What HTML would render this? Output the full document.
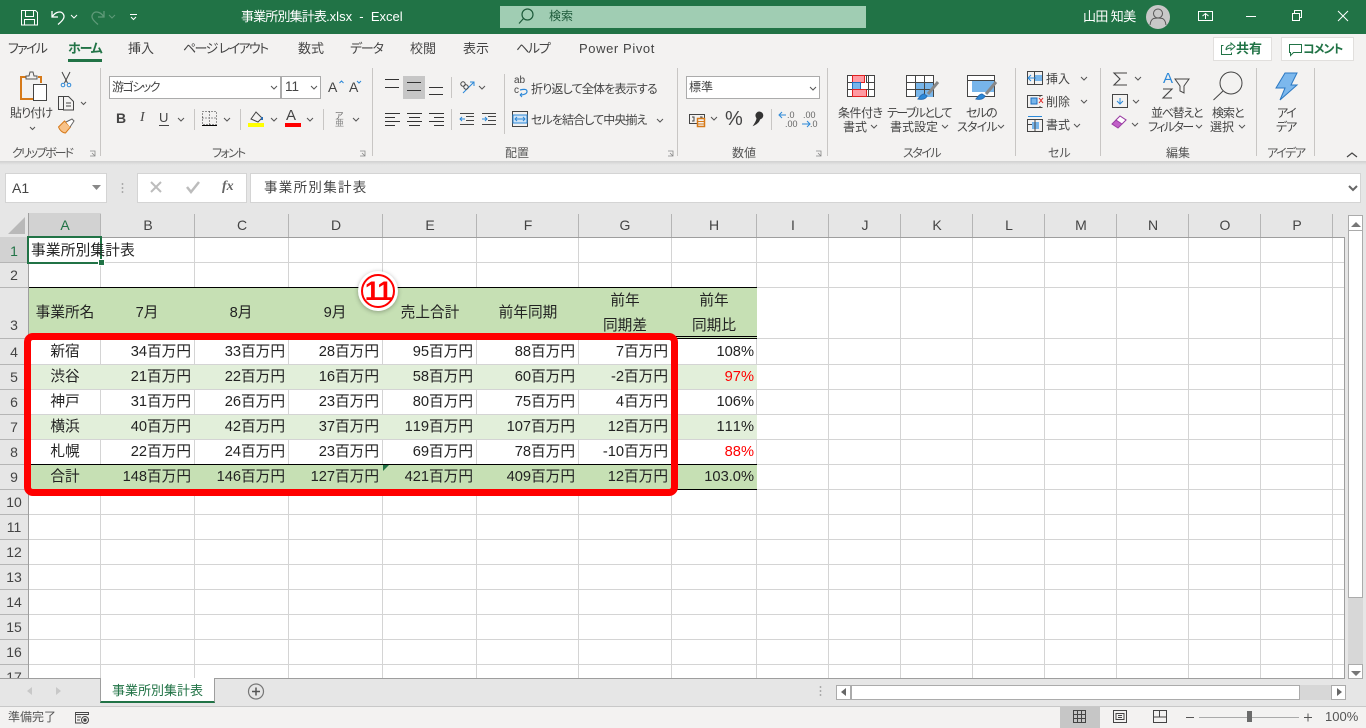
<!DOCTYPE html>
<html lang="ja"><head><meta charset="utf-8"><title>事業所別集計表.xlsx - Excel</title>
<style>
html,body{margin:0;padding:0}
body{width:1366px;height:728px;overflow:hidden;position:relative;background:#e6e6e6;font-family:"Liberation Sans","Noto Sans CJK JP",sans-serif;color:#444;font-feature-settings:"palt"}
div,svg{position:absolute}
svg{overflow:visible}
.t{white-space:nowrap;line-height:16px;font-size:12px;color:#444}
.tab{font-size:13px;top:41px;color:#444}
.g{font-size:12px;top:145px;color:#555}
.w{color:#fff}
.box{background:#fff;border:1px solid #ababab;box-sizing:border-box}
.dv{width:1px;top:68px;height:88px;background:#c8c6c4}
.sd{width:1px;background:#c8c6c4}
.col{top:217px;width:60px;text-align:center;font-size:14px;line-height:16px;color:#444}
.row{left:0;width:28px;text-align:center;font-size:14px;line-height:16px;color:#444}
.c{font-size:14.67px;line-height:18px;color:#222;white-space:nowrap;font-feature-settings:normal;font-kerning:none}
.r{text-align:right;width:90px}
.m{text-align:center;width:90px}
</style></head><body>
<!-- title bar -->
<div style="left:0;top:0;width:1366px;height:34px;background:#217346"></div>
<svg style="left:0;top:0" width="1366" height="34" fill="none" stroke="#fff" stroke-width="1">
<path d="M21.500 10.500h14l2 2v12.500h-16z M25.500 10.500v6h8v-6 M24.500 25v-5.500h10v5.500"/>
<path d="M52 11v6h6 M52.500 16.500c3-5 9-6 11-2 2 3.500-2 7-5.500 10" stroke-width="1.300"/>
<path d="M71 15l3 3 3-3" stroke-width="1"/>
<g stroke="#5f9a79"><path d="M104 11v6h-6 M103.500 16.500c-3-5-9-6-11-2-2 3.500 2 7 5.500 10" stroke-width="1.300"/><path d="M109 15l3 3 3-3"/></g>
<path d="M130 14.500h7 M131 17l2.500 2.500 2.500-2.500"/>
<rect x="1198.500" y="11.500" width="14" height="9"/><path d="M1202.500 16l3-2.500 3 2.500 M1205.500 14v5"/>
<path d="M1246 16.500h10"/>
<path d="M1292.500 13.500h7v7h-7z M1294.500 13v-2.500h7v7h-2"/>
<path d="M1338 11l10 10 M1348 11l-10 10"/>
</svg>
<div class="t w" style="left:241px;top:8px;font-size:13px;line-height:18px"><span style="letter-spacing:-.85px">事業所別集計表</span>.xlsx&nbsp; -&nbsp; Excel</div>
<div style="left:500px;top:6px;width:366px;height:22px;background:#a0cdb3"></div>
<svg style="left:0;top:0" width="900" height="34" fill="none" stroke="#1d5a3a" stroke-width="1.200"><circle cx="527.500" cy="14.500" r="5.500"/><path d="M523.500 18.500l-4.500 5"/></svg>
<div class="t" style="left:549px;top:8px;font-size:12px;line-height:16px;color:#1d5a3a">検索</div>
<div class="t w" style="left:1083px;top:9px;font-size:13px;letter-spacing:-.6px">山田 知美</div>
<div style="left:1146px;top:5px;width:24px;height:24px;border-radius:50%;background:#c8c8c8"></div>
<svg style="left:0;top:0" width="1366" height="34" fill="none" stroke="#555" stroke-width="1"><circle cx="1158" cy="13.500" r="4.500"/><path d="M1150 25c1-7 4-7 8-7s7 0 8 7"/></svg>
<!-- ribbon -->
<div style="left:0;top:34px;width:1366px;height:127px;background:#f3f2f1"></div>
<div style="left:0;top:161px;width:1366px;height:4px;background:linear-gradient(#d0d0d0,#e6e6e6)"></div>
<div class="t tab" style="left:8px;letter-spacing:-1.7px">ファイル</div>
<div class="t tab" style="left:68px;font-weight:700;color:#217346;letter-spacing:-1.2px">ホーム</div>
<div style="left:68px;top:59px;width:34px;height:3px;background:#217346"></div>
<div class="t tab" style="left:128px">挿入</div>
<div class="t tab" style="left:183px;letter-spacing:-1.6px">ページ レイアウト</div>
<div class="t tab" style="left:298px">数式</div>
<div class="t tab" style="left:350px;letter-spacing:-1.2px">データ</div>
<div class="t tab" style="left:410px">校閲</div>
<div class="t tab" style="left:463px">表示</div>
<div class="t tab" style="left:516px;letter-spacing:-1.3px">ヘルプ</div>
<div class="t tab" style="left:579px;letter-spacing:.6px">Power Pivot</div>
<div class="box" style="left:1213px;top:37px;width:59px;height:24px;background:#fff;border-color:#e1dfdd"></div>
<div class="t" style="left:1236px;top:41px;font-size:13px;font-weight:700;color:#217346">共有</div>
<div class="box" style="left:1281px;top:37px;width:73px;height:24px;background:#fff;border-color:#e1dfdd"></div>
<div class="t" style="left:1303px;top:41px;font-size:12px;font-weight:700;color:#217346;letter-spacing:-1px">コメント</div>
<svg style="left:0;top:0" width="1366" height="70" fill="none" stroke="#217346" stroke-width="1"><path d="M1223.500 45.500h-2v9h10v-2 M1226 50c0-3 2-5 5-5v-2l4 3.500-4 3.500v-2c-2 0-4 1-5 2"/><path d="M1289.500 44.500h12v8h-8l-3 3v-3h-1z"/></svg>
<div class="dv" style="left:100px"></div><div class="dv" style="left:372px"></div><div class="dv" style="left:677px"></div><div class="dv" style="left:827px"></div><div class="dv" style="left:1015px"></div><div class="dv" style="left:1100px"></div><div class="dv" style="left:1256px"></div><div class="dv" style="left:1314px"></div>
<div class="sd" style="left:194px;top:109px;height:21px"></div><div class="sd" style="left:240px;top:109px;height:21px"></div><div class="sd" style="left:323px;top:109px;height:21px"></div>
<div class="sd" style="left:451px;top:77px;height:21px"></div><div class="sd" style="left:451px;top:109px;height:21px"></div><div class="sd" style="left:504px;top:74px;height:60px"></div><div class="sd" style="left:771px;top:109px;height:21px"></div>
<!-- group labels -->
<div class="t g" style="left:12px;letter-spacing:-2px">クリップボード</div><div class="t g" style="left:212px;letter-spacing:-1.7px">フォント</div><div class="t g" style="left:505px">配置</div><div class="t g" style="left:732px">数値</div><div class="t g" style="left:903px;letter-spacing:-1.5px">スタイル</div><div class="t g" style="left:1048px">セル</div><div class="t g" style="left:1166px">編集</div><div class="t g" style="left:1267px;letter-spacing:-1.5px">アイデア</div>
<!-- clipboard -->
<svg style="left:0;top:0" width="110" height="140" fill="none" stroke="#444" stroke-width="1">
<path d="M27 77h-6v22h12" stroke="#d67a1a" stroke-width="2"/><path d="M38 77h3v6" stroke="#d67a1a" stroke-width="2"/>
<path d="M26 79v-3h3l1-4h3l1 4h3v3z" fill="#f3f2f1" stroke="#555"/>
<rect x="33.500" y="84.500" width="13" height="16" fill="#fff"/>
<path d="M62 72l5.500 11 M70 72l-5.500 11" stroke="#444"/><circle cx="63" cy="85" r="1.800" stroke="#2b88d8"/><circle cx="69" cy="85" r="1.800" stroke="#2b88d8"/>
<path d="M63.500 96.500h-5v13h5 M63.500 99.500v-3h5l5 5v8.500h-10z M66 103h5 M66 106h5"/>
<path d="M81 102l2.500 2.500 2.500-2.500" stroke="#555"/>
<path d="M58.500 127l6-6 6 6-5 6c-3 0-6-3-7-6z" fill="#f8c288" stroke="#d67a1a"/><path d="M66 122l6-3 2 2-4 6" fill="#fff" stroke="#666"/>
<path d="M30 127l2.500 2.500 2.500-2.500" stroke="#555"/>
<path d="M90 151h5v5h-5" stroke="#888" stroke-width=".8"/><path d="M92 153l3 3" stroke="#888" stroke-width=".8"/>
</svg>
<div class="t" style="left:10px;top:105px;letter-spacing:-.9px">貼り付け</div>
<!-- font -->
<div class="box" style="left:109px;top:76px;width:172px;height:23px"></div><div class="box" style="left:281px;top:76px;width:40px;height:23px"></div>
<div class="t" style="left:112px;top:79px;font-size:12px;letter-spacing:-1.5px">游ゴシック</div><div class="t" style="left:285px;top:79px;font-size:13.5px">11</div>
<div class="t" style="left:328px;top:79px;font-size:14px;line-height:17px">A</div><div class="t" style="left:349px;top:79px;font-size:14px;line-height:17px">A</div>
<div class="t" style="left:116px;top:110px;font-size:14px;font-weight:700">B</div><div class="t" style="left:140px;top:110px;font-size:14px;font-style:italic;font-family:'Liberation Serif',serif">I</div><div class="t" style="left:159px;top:110px;font-size:13px">U</div>
<div class="t" style="left:286px;top:107px;font-size:15px;line-height:18px">A</div>
<div class="t" style="left:335px;top:111px;font-size:9px;line-height:10px;color:#666">ア</div><div class="t" style="left:335px;top:119px;font-size:9px;line-height:9px;color:#888">亜</div>
<svg style="left:0;top:0" width="680" height="160" fill="none" stroke="#444" stroke-width="1">
<path d="M271 86l3 3 3-3 M311 86l3 3 3-3 M178 118l3 3 3-3 M224 118l3 3 3-3 M271 118l3 3 3-3 M307 118l3 3 3-3 M353 118l3 3 3-3 M479 86l3 3 3-3 M657 119l3 3 3-3" stroke="#555"/>
<path d="M339.500 83l2-2 2 2 M357 81l2 2 2-2" stroke="#2b88d8"/>
<path d="M159 125.500h10" />
<path d="M202.500 111.500h14v13h-14z M209.500 111.500v13 M202.500 118h14" stroke-dasharray="1 2" stroke="#333"/><path d="M202 125.500h15" stroke="#000"/>
<path d="M251 119l5-7 6 6-4 4z" /><path d="M262 117v3" stroke="#2b6cb0" stroke-width="2"/>
<rect x="248" y="123" width="16" height="4" fill="#ff0" stroke="none"/>
<rect x="285" y="123" width="16" height="4" fill="#f00" stroke="none"/>
<!-- alignment -->
<rect x="403" y="76" width="22" height="23" fill="#c6c6c6" stroke="none"/>
<path d="M385 79.500h14 M385 87.500h14 M407 82.500h14 M407 90.500h14 M429 87.500h14 M429 94.500h14" stroke="#333"/>
<path d="M385 113.500h15 M385 117.500h10 M385 121.500h15 M385 125.500h10" stroke="#333"/>
<path d="M407 113.500h15 M409 117.500h11 M407 121.500h15 M409 125.500h11" stroke="#333"/>
<path d="M429 113.500h15 M434 117.500h10 M429 121.500h15 M434 125.500h10" stroke="#333"/>
<path d="M460 124.500h14 M466 116.500h8 M466 120.500h8 M460 113.500h14" stroke-width=".9"/>
<path d="M482 124.500h14 M488 116.500h8 M488 120.500h8 M482 113.500h14" stroke-width=".9"/>
<path d="M465 119h-5m2-2l-2 2 2 2" stroke="#2b88d8"/><path d="M482 119h5m-2-2l2 2-2 2" stroke="#2b88d8"/>
<path d="M463 93l11-11m-4 0h4v4" stroke="#2b88d8"/><circle cx="463" cy="84" r="2.200"/><circle cx="466" cy="87" r="2.200"/>
<path d="M520 95c3 0 7-1 7-3.500s-3-2.500-7-1.500" stroke="#2b88d8" stroke-width="1.200"/>
<path d="M520 95l2-2 M520 95l2 2" stroke="#2b88d8"/>
<rect x="512.500" y="111.500" width="15" height="15" /><rect x="513" y="115" width="14" height="8" fill="#cfe4f7" stroke="#2b88d8"/>
<path d="M515 119h10 M517 117l-2 2 2 2 M523 117l2 2-2 2" stroke="#2b88d8"/>
</svg>
<div class="t" style="left:514px;top:76px;font-size:10px;line-height:10px">ab</div><div class="t" style="left:514px;top:86px;font-size:10px;line-height:10px">c</div>
<div class="t" style="left:531px;top:81px;font-size:12px;letter-spacing:-.8px">折り返して全体を表示する</div>
<div class="t" style="left:531px;top:112px;font-size:12px;letter-spacing:-.9px">セルを結合して中央揃え</div>
<!-- number -->
<div class="box" style="left:686px;top:76px;width:134px;height:23px"></div>
<div class="t" style="left:689px;top:79px;font-size:12px">標準</div>
<div class="t" style="left:725px;top:108px;font-size:20px;line-height:22px">%</div>
<div class="t" style="left:787px;top:111px;font-size:9px;line-height:9px;color:#666">.0</div><div class="t" style="left:785px;top:120px;font-size:9px;line-height:9px;color:#666">.00</div>
<div class="t" style="left:803px;top:111px;font-size:9px;line-height:9px;color:#666">.00</div><div class="t" style="left:810px;top:120px;font-size:9px;line-height:9px;color:#666">.0</div>
<svg style="left:0;top:0" width="830" height="160" fill="none" stroke="#444" stroke-width="1">
<path d="M810 87l3 3 3-3 M711 117l3 3 3-3" stroke="#555"/>
<path d="M689.500 114.500h15v9h-15z M692 117h2v4h-2 M700 117h2v4h-2" />
<rect x="697.500" y="118.500" width="7" height="8" fill="#f3f2f1" stroke="#d67a1a" stroke-width="1.500"/><path d="M698 121.500h6 M698 124h6" stroke="#d67a1a"/>
<path d="M757 113a3.400 3.400 0 1 1-.1 .1 M760 116c.5 4-2 7-6 9 2-3 3-5 3-7" fill="#333" stroke="#333"/>
<path d="M780 115h6m-4-3l-3 3 3 3" stroke="#2b88d8"/><path d="M802 124h8m-3-3l3 3-3 3" stroke="#2b88d8"/>
</svg>
<!-- styles -->
<svg style="left:0;top:0" width="1366" height="160" fill="none" stroke="#444" stroke-width="1">
<rect x="847.500" y="75.500" width="27" height="21" fill="#fff"/>
<rect x="852.500" y="75.500" width="12" height="7" fill="#ff9aa2" stroke="#e02020"/>
<rect x="852.500" y="82.500" width="8" height="7" fill="#77b5ea" stroke="#1f6fc0"/>
<rect x="852.500" y="89.500" width="14" height="7" fill="#ff9aa2" stroke="#e02020"/>
<path d="M866.500 75v7 M868.500 75v22 M847 82.500h5 M847 89.500h5 M866 82.500h8 M866 89.500h8"/>
<rect x="906.500" y="75.500" width="27" height="21" fill="#fff"/>
<rect x="915" y="82" width="18" height="15" fill="#77b5ea" stroke="none"/>
<path d="M906 82.500h28 M906 89.500h28 M915.500 75v22 M924.500 75v22"/>
<path d="M938 82l-10 12" stroke="#888" stroke-width="3"/><path d="M924 94c-3 0-4 3-6 5 4 1 8 0 9-3z" fill="#2b88d8" stroke="#2b6cb0"/>
<rect x="967.500" y="75.500" width="27" height="21" fill="#fff"/>
<rect x="972" y="80" width="22" height="12" fill="#77b5ea" stroke="none"/>
<path d="M967 80.500h28"/>
<path d="M996 82l-10 12" stroke="#888" stroke-width="3"/><path d="M982 94c-3 0-4 3-6 5 4 1 8 0 9-3z" fill="#2b88d8" stroke="#2b6cb0"/>
<path d="M871 125l3 3 3-3 M942 125l3 3 3-3 M998 125l3 3 3-3 M1081 77l3 3 3-3 M1081 100l3 3 3-3 M1074 124l3 3 3-3 M1135 77l3 3 3-3 M1133 100l3 3 3-3 M1132 123l3 3 3-3 M1196 125l3 3 3-3 M1239 125l3 3 3-3" stroke="#555"/>
<!-- cells -->
<path d="M1027.500 71.500h15v13h-15z M1034.500 71v14 M1027 78h16" /><rect x="1035" y="75" width="7" height="6" fill="#77b5ea" stroke="none"/><path d="M1036 78h-8m3-3l-3 3 3 3" stroke="#2b88d8"/>
<path d="M1027.500 95.500h15 M1027.500 107.500h15 M1027.500 95v13 M1040 95v2 M1040 106v2" /><rect x="1031" y="98" width="6" height="6" fill="#77b5ea" stroke="#1f6fc0"/><path d="M1039 98l4 5 M1043 98l-4 5" stroke="#e02020"/>
<rect x="1027.500" y="119.500" width="15" height="12"/><rect x="1032" y="122" width="7" height="7" fill="#77b5ea" stroke="none"/><path d="M1032 124.500h-4 M1035 120v11" stroke="#444"/><path d="M1028 116.500h14" stroke="#2b88d8"/>
<!-- edit -->
<path d="M1127 73h-13l6 6-6 6h13" stroke-width="1.100"/>
<rect x="1112.500" y="94.500" width="15" height="13"/><path d="M1120 98v6m-3-3l3 3 3-3" stroke="#2b88d8"/>
<path d="M1112 124l8-8 6 4-8 8z" fill="#c15fc8" stroke="#9a3ea3"/>
<path d="M1120 116l6 4-4 4-6-4z" fill="#fff" stroke="#9a3ea3"/>
<path d="M1175 79h14l-5 7v7l-4-2v-5z"/>
<path d="M1163 89h9l-9 9h9" stroke-width="1.100"/>
<circle cx="1231" cy="83" r="11"/><path d="M1223 91l-9.500 9" />
<path d="M1285 73h12l-6 12h6l-17 15 5-12h-9z" fill="#7cb8ed" stroke="#2b78c2"/>
<path d="M1347 157l5-4 5 4" stroke="#444" stroke-width="1.200"/>
<path d="M360 151h5v5h-5 M362 153l3 3 M668 151h5v5h-5 M670 153l3 3 M816 151h5v5h-5 M818 153l3 3" stroke="#888" stroke-width=".8"/>
</svg>
<div class="t" style="left:1163px;top:70px;font-size:15px;line-height:17px;color:#2b88d8">A</div>
<div class="t" style="left:838px;top:105px;letter-spacing:-.5px">条件付き</div><div class="t" style="left:843px;top:119px">書式</div>
<div class="t" style="left:887px;top:105px;letter-spacing:-1.6px">テーブルとして</div><div class="t" style="left:890px;top:119px">書式設定</div>
<div class="t" style="left:966px;top:105px;letter-spacing:-1.3px">セルの</div><div class="t" style="left:957px;top:119px;letter-spacing:-.8px">スタイル</div>
<div class="t" style="left:1046px;top:71px">挿入</div><div class="t" style="left:1046px;top:94px">削除</div><div class="t" style="left:1046px;top:117px">書式</div>
<div class="t" style="left:1151px;top:105px;letter-spacing:-1.3px">並べ替えと</div><div class="t" style="left:1148px;top:119px;letter-spacing:-1.6px">フィルター</div>
<div class="t" style="left:1212px;top:105px;letter-spacing:-1px">検索と</div><div class="t" style="left:1210px;top:119px">選択</div>
<div class="t" style="left:1277px;top:105px;letter-spacing:-1.5px">アイ</div><div class="t" style="left:1276px;top:119px;letter-spacing:-1px">デア</div>
<!-- formula bar -->
<div class="box" style="left:5px;top:173px;width:102px;height:30px;border-color:#d4d4d4"></div>
<div class="t" style="left:12px;top:180px;font-size:14px">A1</div>
<div class="box" style="left:137px;top:173px;width:110px;height:30px;border-color:#d4d4d4"></div>
<div class="box" style="left:250px;top:173px;width:1111px;height:30px;border-color:#d4d4d4"></div>
<div class="t" style="left:264px;top:179px;font-size:13.5px;line-height:17px;letter-spacing:1.3px;font-feature-settings:normal">事業所別集計表</div>
<div class="t" style="left:222px;top:179px;font-size:14px;font-style:italic;font-weight:700;font-family:'Liberation Serif',serif;color:#666">fx</div>
<svg style="left:0;top:0" width="1366" height="240" fill="none" stroke="#bcbcbc" stroke-width="2">
<path d="M92 185h9l-4.500 5z" fill="#888" stroke="none"/>
<path d="M122.500 183v2 M122.500 187v2 M122.500 191v2" stroke="#aaa" stroke-width="1.500"/>
<path d="M151 182l10 10 M161 182l-10 10"/>
<path d="M187 187l4 5 8-10" stroke-width="2.500"/>
<path d="M1349 186l4 4 4-4" stroke="#666"/>
<path d="M8 234l17-17v17z" fill="#b9b9b9" stroke="none"/>
</svg>
<!-- headers -->
<div style="left:29px;top:213px;width:72px;height:24px;background:#d2d2d2"></div>
<div style="left:0;top:237px;width:28px;height:25px;background:#d2d2d2"></div>
<div style="left:29px;top:237px;width:1315px;height:441px;background:#fff"></div>
<svg style="left:0;top:0" width="1366" height="728" fill="none" stroke="#d4d4d4" stroke-width="1">
<path d="M100.500 237V678M194.500 237V678M288.500 237V678M382.500 237V678M476.500 237V678M578.500 237V678M671.500 237V678M756.500 237V678M828.500 237V678M900.500 237V678M972.500 237V678M1044.500 237V678M1116.500 237V678M1188.500 237V678M1260.500 237V678M1332.500 237V678"/>
<path d="M29 262.500H1344M29 287.500H1344M29 338.500H1344M29 364.500H1344M29 389.500H1344M29 414.500H1344M29 439.500H1344M29 464.500H1344M29 489.500H1344M29 514.500H1344M29 539.500H1344M29 564.500H1344M29 589.500H1344M29 614.500H1344M29 639.500H1344M29 664.500H1344"/>
<path stroke="#b5b5b5" d="M100.500 214V237M194.500 214V237M288.500 214V237M382.500 214V237M476.500 214V237M578.500 214V237M671.500 214V237M756.500 214V237M828.500 214V237M900.500 214V237M972.500 214V237M1044.500 214V237M1116.500 214V237M1188.500 214V237M1260.500 214V237M1332.500 214V237"/>
<path stroke="#b5b5b5" d="M0 262.500H28M0 287.500H28M0 338.500H28M0 364.500H28M0 389.500H28M0 414.500H28M0 439.500H28M0 464.500H28M0 489.500H28M0 514.500H28M0 539.500H28M0 564.500H28M0 589.500H28M0 614.500H28M0 639.500H28M0 664.500H28"/>
<path stroke="#9e9e9e" d="M28.500 213V678M28 237.500H1344.500V678"/>
</svg>
<div class="col" style="left:35px;color:#217346">A</div><div class="col" style="left:118px">B</div><div class="col" style="left:212px">C</div><div class="col" style="left:306px">D</div><div class="col" style="left:400px">E</div><div class="col" style="left:498px">F</div><div class="col" style="left:595px">G</div><div class="col" style="left:684px">H</div><div class="col" style="left:763px">I</div><div class="col" style="left:835px">J</div><div class="col" style="left:907px">K</div><div class="col" style="left:979px">L</div><div class="col" style="left:1051px">M</div><div class="col" style="left:1123px">N</div><div class="col" style="left:1195px">O</div><div class="col" style="left:1267px">P</div>
<div class="row" style="top:243px;color:#217346">1</div><div class="row" style="top:267px">2</div><div class="row" style="top:317px">3</div><div class="row" style="top:344px">4</div><div class="row" style="top:369px">5</div><div class="row" style="top:394px">6</div><div class="row" style="top:419px">7</div><div class="row" style="top:444px">8</div><div class="row" style="top:469px">9</div><div class="row" style="top:494px">10</div><div class="row" style="top:519px">11</div><div class="row" style="top:544px">12</div><div class="row" style="top:569px">13</div><div class="row" style="top:594px">14</div><div class="row" style="top:619px">15</div><div class="row" style="top:644px">16</div><div class="row" style="top:669px;height:9px;overflow:hidden">17</div>
<!-- fills -->
<div style="left:29px;top:287px;width:728px;height:52px;background:#c6e0b4;border-top:1px solid #000;border-bottom:3px double #000;box-sizing:border-box"></div>
<div style="left:29px;top:365px;width:728px;height:24px;background:#e2efda"></div>
<div style="left:29px;top:415px;width:728px;height:24px;background:#e2efda"></div>
<div style="left:29px;top:464px;width:728px;height:26px;background:#c6e0b4;border-top:1px solid #000;border-bottom:1px solid #000;box-sizing:border-box"></div>
<!-- selection -->
<div style="left:27px;top:236px;width:75px;height:28px;border:2px solid #217346;box-sizing:border-box"></div>
<div style="left:98px;top:259px;width:5px;height:5px;background:#217346;border:1px solid #fff"></div>
<div class="c" style="left:31px;top:242px;letter-spacing:.2px">事業所別集計表</div>
<!-- header row 3 -->
<div class="c m" style="left:20px;top:304px">事業所名</div><div class="c m" style="left:102px;top:304px">7月</div><div class="c m" style="left:196px;top:304px">8月</div><div class="c m" style="left:290px;top:304px">9月</div><div class="c m" style="left:385px;top:304px">売上合計</div><div class="c m" style="left:483px;top:304px">前年同期</div>
<div class="c m" style="left:580px;top:292px">前年</div><div class="c m" style="left:580px;top:317px">同期差</div><div class="c m" style="left:669px;top:292px">前年</div><div class="c m" style="left:669px;top:317px">同期比</div>
<!-- data -->
<div class="c m" style="left:20px;top:343px">新宿</div><div class="c r" style="left:101px;top:343px">34百万円</div><div class="c r" style="left:195px;top:343px">33百万円</div><div class="c r" style="left:289px;top:343px">28百万円</div><div class="c r" style="left:383px;top:343px">95百万円</div><div class="c r" style="left:485px;top:343px">88百万円</div><div class="c r" style="left:578px;top:343px">7百万円</div><div class="c r" style="left:664px;top:343px">108%</div>
<div class="c m" style="left:20px;top:368px">渋谷</div><div class="c r" style="left:101px;top:368px">21百万円</div><div class="c r" style="left:195px;top:368px">22百万円</div><div class="c r" style="left:289px;top:368px">16百万円</div><div class="c r" style="left:383px;top:368px">58百万円</div><div class="c r" style="left:485px;top:368px">60百万円</div><div class="c r" style="left:578px;top:368px">-2百万円</div><div class="c r" style="left:664px;top:368px;color:#f00">97%</div>
<div class="c m" style="left:20px;top:393px">神戸</div><div class="c r" style="left:101px;top:393px">31百万円</div><div class="c r" style="left:195px;top:393px">26百万円</div><div class="c r" style="left:289px;top:393px">23百万円</div><div class="c r" style="left:383px;top:393px">80百万円</div><div class="c r" style="left:485px;top:393px">75百万円</div><div class="c r" style="left:578px;top:393px">4百万円</div><div class="c r" style="left:664px;top:393px">106%</div>
<div class="c m" style="left:20px;top:418px">横浜</div><div class="c r" style="left:101px;top:418px">40百万円</div><div class="c r" style="left:195px;top:418px">42百万円</div><div class="c r" style="left:289px;top:418px">37百万円</div><div class="c r" style="left:383px;top:418px">119百万円</div><div class="c r" style="left:485px;top:418px">107百万円</div><div class="c r" style="left:578px;top:418px">12百万円</div><div class="c r" style="left:664px;top:418px">111%</div>
<div class="c m" style="left:20px;top:443px">札幌</div><div class="c r" style="left:101px;top:443px">22百万円</div><div class="c r" style="left:195px;top:443px">24百万円</div><div class="c r" style="left:289px;top:443px">23百万円</div><div class="c r" style="left:383px;top:443px">69百万円</div><div class="c r" style="left:485px;top:443px">78百万円</div><div class="c r" style="left:578px;top:443px">-10百万円</div><div class="c r" style="left:664px;top:443px;color:#f00">88%</div>
<div class="c m" style="left:20px;top:468px">合計</div><div class="c r" style="left:101px;top:468px">148百万円</div><div class="c r" style="left:195px;top:468px">146百万円</div><div class="c r" style="left:289px;top:468px">127百万円</div><div class="c r" style="left:383px;top:468px">421百万円</div><div class="c r" style="left:485px;top:468px">409百万円</div><div class="c r" style="left:578px;top:468px">12百万円</div><div class="c r" style="left:664px;top:468px">103.0%</div>
<svg style="left:0;top:0" width="400" height="480"><path d="M383 465h6l-6 6z" fill="#217346"/></svg>
<!-- red frame -->
<div style="left:24px;top:333px;width:654px;height:163px;border:7px solid #f00;border-radius:9px;box-sizing:border-box"></div>
<!-- badge -->
<div style="left:358px;top:271px;width:40px;height:40px;border-radius:50%;background:#fff;box-shadow:0 1px 5px rgba(0,0,0,.3)"></div>
<div style="left:361px;top:274px;width:34px;height:34px;border-radius:50%;border:2px solid #f00;box-sizing:border-box"></div>
<div class="t" style="left:361px;top:274px;width:34px;text-align:center;font-size:27px;line-height:34px;font-weight:700;color:#f00;letter-spacing:-1px;font-feature-settings:normal">11</div>
<!-- sheet tabs -->
<div style="left:0;top:678px;width:1345px;height:1px;background:#9e9e9e"></div>
<div style="left:100px;top:678px;width:115px;height:25px;background:#fff;border-left:1px solid #9e9e9e;border-right:1px solid #9e9e9e;border-bottom:2px solid #217346;box-sizing:border-box"></div>
<div class="t" style="left:112px;top:683px;font-size:13px;color:#217346;font-feature-settings:normal">事業所別集計表</div>
<svg style="left:0;top:0" width="1366" height="728" fill="none" stroke="#666" stroke-width="1">
<path d="M32 687v8l-5-4z M56 687v8l5-4z" fill="#c8c8c8" stroke="none"/>
<circle cx="256" cy="691.500" r="7.500" stroke="#777" stroke-width="1.200"/><path d="M252 691.500h8 M256 687.500v8" stroke="#555" stroke-width="1.500"/>
<path d="M820.500 686v2 M820.500 690v2 M820.500 694v2" stroke="#aaa" stroke-width="1.500"/>
</svg>
<div style="left:836px;top:685px;width:15px;height:15px;background:#fff;border:1px solid #ababab;box-sizing:border-box"></div>
<div style="left:851px;top:685px;width:449px;height:15px;background:#fff;border:1px solid #ababab;box-sizing:border-box"></div>
<div style="left:1300px;top:685px;width:31px;height:15px;background:#d7d7d7"></div>
<div style="left:1331px;top:685px;width:15px;height:15px;background:#fff;border:1px solid #ababab;box-sizing:border-box"></div>
<!-- v scroll -->
<div style="left:1348px;top:215px;width:15px;height:463px;background:#d7d7d7"></div>
<div style="left:1348px;top:215px;width:15px;height:16px;background:#fff;border:1px solid #ababab;box-sizing:border-box"></div>
<div style="left:1348px;top:230px;width:15px;height:368px;background:#fff;border:1px solid #ababab;box-sizing:border-box"></div>
<div style="left:1348px;top:664px;width:15px;height:15px;background:#fff;border:1px solid #ababab;box-sizing:border-box"></div>
<svg style="left:0;top:0" width="1366" height="728"><path d="M1351 227h10l-5-5z M1351 671h10l-5 5z" fill="#777"/><path d="M846 688v8l-5-4z M1337 688v8l5-4z" fill="#666"/></svg>
<!-- status -->
<div style="left:0;top:706px;width:1366px;height:22px;background:#f3f2f1;border-top:1px solid #c8c8c8;box-sizing:border-box"></div>
<div class="t" style="left:8px;top:709px;font-size:12px;color:#555;font-feature-settings:normal">準備完了</div>
<div style="left:1060px;top:707px;width:40px;height:21px;background:#c6c6c6"></div>
<div class="t" style="left:1325px;top:709px;font-size:13px;color:#555">100%</div>
<svg style="left:0;top:0" width="1366" height="728" fill="none" stroke="#444" stroke-width="1">
<path d="M75.500 712.500h13v2h-13z M75.500 714v9h6 M77 717h4 M77 720h3" stroke-width=".9"/><circle cx="85" cy="720" r="3.500"/><circle cx="85" cy="720" r="1.200" fill="#444"/>
<path d="M1073.500 710.500h12v12h-12z M1077.500 710v13 M1081.500 710v13 M1073 714.500h13 M1073 718.500h13"/>
<path d="M1113.500 710.500h13v12h-13z M1116 713.500h8v6h-8z M1118 715.500h4 M1118 717.500h4"/>
<path d="M1153.500 710.500h13v12h-13z M1159.500 710v7h-6 M1159.500 717h7" />
<path d="M1186 717.500h8 M1304 717.500h8 M1308 713.500v8" stroke="#555"/>
<path d="M1199 717.500h100" stroke="#aaa"/>
</svg>
<div style="left:1247px;top:711px;width:5px;height:11px;background:#6b6b6b"></div>
</body></html>
